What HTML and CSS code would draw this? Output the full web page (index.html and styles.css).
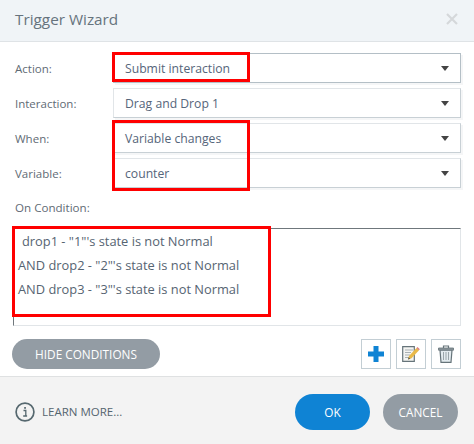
FILE: index.html
```html
<!DOCTYPE html>
<html>
<head>
    <meta charset="utf-8">
    <title>Trigger Wizard</title>
    <link rel="stylesheet" href="styles.css">
</head>
<body>
<div class="wizard">
    <div class="head">
        <span class="title">Trigger Wizard</span>
        <svg class="close" width="12" height="12" viewBox="0 0 12 12"><path d="M1 1l10 10M11 1L1 11" stroke="#d5d8da" stroke-width="2.2" fill="none"/></svg>
    </div>
    <div class="body">
        <div class="row">
            <label>Action:</label>
            <div class="select first"><span>Submit interaction</span><i class="arrow"></i></div>
        </div>
        <div class="row">
            <label>Interaction:</label>
            <div class="select"><span>Drag and Drop 1</span><i class="arrow"></i></div>
        </div>
        <div class="row">
            <label>When:</label>
            <div class="select"><span>Variable changes</span><i class="arrow"></i></div>
        </div>
        <div class="row">
            <label>Variable:</label>
            <div class="select"><span>counter</span><i class="arrow"></i></div>
        </div>
        <div class="cond-label">On Condition:</div>
        <div class="cond">
            <div class="cond-line indent">drop1 - "1"'s state is not Normal</div>
            <div class="cond-line">AND drop2 - "2"'s state is not Normal</div>
            <div class="cond-line">AND drop3 - "3"'s state is not Normal</div>
        </div>
        <div class="tools">
            <button class="pill hide">HIDE CONDITIONS</button>
            <div class="icons">
                <button class="icon">
                    <svg width="16" height="16" viewBox="0 0 16 16"><path d="M5.5 0h5v5.500h5.500v5h-5.500v5.500h-5v-5.500h-5.500v-5h5.500z" fill="#0f83d4"/></svg>
                </button>
                <button class="icon">
                    <svg width="18" height="18" viewBox="0 0 18 18">
                        <path d="M.7 1.700h11.600v14.600h-11.600z" fill="#f4f4f2" stroke="#66747a" stroke-width="1.200"/>
                        <path d="M3 5h8M3 7.500h6M3 10h5M3 12.500h4" stroke="#a9b0b3" stroke-width="1" fill="none"/>
                        <path d="M6 14.500l1-3.500 7.500-8 2.500 2.300-7.500 8z" fill="#e9b949"/>
                        <path d="M14.500 3l1-1 2.300 2.300-1 1z" fill="#d9797a"/>
                        <path d="M6 14.500l.6-2.200 1.700 1.500z" fill="#5b5b50"/>
                    </svg>
                </button>
                <button class="icon">
                    <svg width="16" height="18" viewBox="0 0 16 18">
                        <path d="M2 5h12l-1 12.300h-10z" fill="#e3ebef" stroke="#66747a" stroke-width="1.200"/>
                        <path d="M.5 3h15v2.200h-15z" fill="#8c979c" stroke="#66747a" stroke-width=".8"/>
                        <path d="M5.500 3v-2h5v2" fill="none" stroke="#66747a" stroke-width="1.200"/>
                        <path d="M5.500 7v8M8 7v8M10.500 7v8" stroke="#9aa5aa" stroke-width="1" fill="none"/>
                    </svg>
                </button>
            </div>
        </div>
    </div>
    <div class="foot">
        <svg class="info" width="20" height="20" viewBox="0 0 20 20">
            <circle cx="10" cy="10" r="8.900" fill="none" stroke="#56686f" stroke-width="1.700"/>
            <path d="M8.500 8.500h2.300v5.500h1.300M8.200 14h3.900" fill="none" stroke="#56686f" stroke-width="1.300"/>
            <rect x="9.200" y="5" width="1.700" height="1.800" fill="#56686f"/>
        </svg>
        <span class="learn">LEARN MORE...</span>
        <button class="pill ok">OK</button>
        <button class="pill cancel">CANCEL</button>
    </div>
    <div class="mark mark-action"></div>
    <div class="mark mark-when"></div>
    <div class="mark mark-cond"></div>
</div>
</body>
</html>
```

FILE: styles.css
```css
* {
    box-sizing: border-box;
}
body {
    margin: 0;
    background: #fff;
}
.wizard {
    position: relative;
    width: 474px;
    height: 444px;
    overflow: hidden;
    font-family: "Open Sans", "Liberation Sans", sans-serif;
    font-size: 12px;
    color: #5a6a78;
}
.head {
    display: flex;
    align-items: center;
    justify-content: space-between;
    height: 42px;
    padding: 0 16px 3px 15px;
    background: #f0f4f7;
    border-bottom: 1px solid #dfe3e6;
}
.title {
    font-size: 15.300px;
    color: #66737d;
}
.body {
    height: 334px;
    padding: 11px 13px 0 12px;
}
.row {
    display: flex;
    align-items: center;
    height: 30px;
    margin-bottom: 5px;
}
.row label {
    width: 101px;
    padding-left: 3px;
    font-size: 11.500px;
    color: #5f6b75;
}
.select {
    display: flex;
    align-items: center;
    justify-content: space-between;
    width: 348px;
    height: 30px;
    padding: 0 11px 0 11px;
    background: #fff;
    border: 1px solid #e1e5e8;
    border-bottom: 1px solid #c8d0d5;
    border-right: 1px solid #c8d0d5;
    box-shadow: 2px 2px 0 #f5f6f7;
    font-size: 12.200px;
    color: #56657a;
}
.select.first {
    border-color: #b4bfc6;
}
.arrow {
    width: 0;
    height: 0;
    margin-top: 1px;
    border-left: 4px solid transparent;
    border-right: 4px solid transparent;
    border-top: 5px solid #444;
}
.cond-label {
    margin: 11px 0 0 3px;
    height: 29px;
    line-height: 18px;
    font-size: 11.600px;
    color: #5f6b75;
}
.cond {
    width: 448px;
    height: 98px;
    margin-left: 1px;
    padding: 0 0 0 4px;
    border: 1px solid #e1e5e8;
    border-top: 1px solid #6f777c;
    border-left: 1px solid #6f777c;
}
.cond-line {
    height: 24px;
    line-height: 24px;
    font-size: 12.850px;
    color: #566472;
}
.indent {
    padding-left: 4px;
}
.tools {
    display: flex;
    justify-content: space-between;
    margin-top: 13px;
}
.icons {
    display: flex;
    gap: 5px;
}
.icon {
    display: flex;
    align-items: center;
    justify-content: center;
    width: 30px;
    height: 30px;
    padding: 0;
    background: #fff;
    border: 1px solid #c3ced4;
}
.pill {
    height: 30px;
    padding: 0;
    border: 0;
    border-radius: 18px;
    background: #939ca4;
    color: #fff;
    font-family: inherit;
    font-size: 11.800px;
}
.hide {
    width: 148px;
}
.foot {
    display: flex;
    align-items: center;
    height: 68px;
    padding: 2px 16px 0 15px;
    background: #f3f3f3;
    border-top: 1px solid #dfe1e2;
}
.info {
    margin-right: 7px;
}
.learn {
    flex: 1;
    font-size: 11.500px;
    color: #55656f;
}
.foot .pill {
    width: 75px;
    height: 36px;
}
.ok {
    margin-right: 13px;
    background: #0f83d4;
}
.mark {
    position: absolute;
    border: 3px solid #ff0000;
}
.mark-action {
    left: 112px;
    top: 52px;
    width: 138px;
    height: 30px;
}
.mark-when {
    left: 112px;
    top: 120px;
    width: 138px;
    height: 71px;
}
.mark-cond {
    left: 12px;
    top: 226px;
    width: 259px;
    height: 91px;
}
```
